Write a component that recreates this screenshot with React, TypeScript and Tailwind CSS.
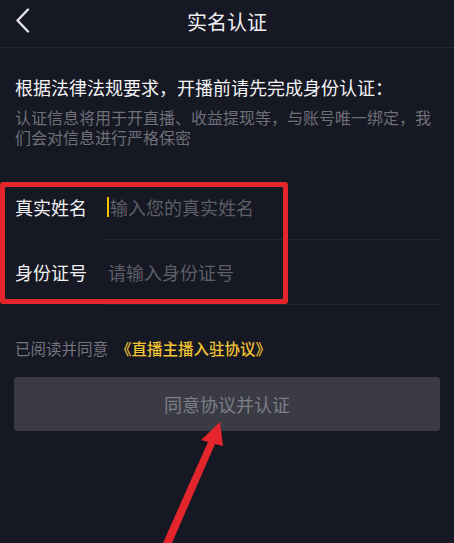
import React from "react";

export default function App() {
  return (
    <div
      className="relative w-[454px] h-[543px] overflow-hidden bg-[#161823] text-[#ececee]"
      style={{ fontFamily: '"Noto Sans CJK SC", "Noto Sans", sans-serif' }}
    >
      {/* Header */}
      <div className="relative h-[48px] flex items-center justify-center border-b border-[#252733]">
        <svg
          className="absolute left-[14px] top-[8px]"
          width="18"
          height="25"
          viewBox="0 0 18 25"
          fill="none"
        >
          <path d="M14 1.5 L3.5 12.5 L14 23.5" stroke="#e6e6e8" strokeWidth="2.4" strokeLinecap="round" strokeLinejoin="round" />
        </svg>
        <span className="text-[20px] leading-[28px] -mt-[3px] text-[#f0f0f2]">实名认证</span>
      </div>

      {/* Intro */}
      <div className="px-[15px]">
        <div className="mt-[27px] text-[18px] leading-[24px] text-[#f4f4f6] whitespace-nowrap">
          根据法律法规要求，开播前请先完成身份认证：
        </div>
        <div className="mt-[8px] text-[16px] leading-[20px] text-[#6e6f78]">
          认证信息将用于开直播、收益提现等，与账号唯一绑定，我们会对信息进行严格保密
        </div>
      </div>

      {/* Form */}
      <div className="mt-[28px]">
        <div className="flex h-[65px]">
          <div className="w-[105px] pl-[15px] flex items-center text-[18px] text-[#f0f0f2]">真实姓名</div>
          <div className="flex-1 mr-[15px] border-b border-[#262833] flex items-center">
            <span className="ml-[2px] w-[2px] h-[20px] bg-[#f2c200]" />
            <span className="ml-[1px] text-[18px] text-[#5d5e67]">输入您的真实姓名</span>
          </div>
        </div>
        <div className="flex h-[65px]">
          <div className="w-[105px] pl-[15px] flex items-center text-[18px] text-[#f0f0f2]">身份证号</div>
          <div className="flex-1 mr-[15px] border-b border-[#262833] flex items-center">
            <span className="ml-[3px] text-[18px] text-[#5d5e67]">请输入身份证号</span>
          </div>
        </div>
      </div>

      {/* Agreement */}
      <div className="mt-[34px] px-[15px] flex items-center h-[20px] text-[15.5px]">
        <span className="text-[#74757e]">已阅读并同意</span>
        <span className="ml-[8px] font-medium text-[#f3c433]">《直播主播入驻协议》</span>
      </div>

      {/* Button */}
      <div className="mt-[18px] mx-[14px] h-[54px] rounded-[3px] bg-[#3a3b45] flex items-center justify-center">
        <span className="text-[18px] text-[#7d7e87]">同意协议并认证</span>
      </div>

      {/* Red annotation box */}
      <div className="absolute left-0 top-[182px] w-[288px] h-[122px] border-[5px] border-[#e4262c] rounded-[3px]" />

      {/* Red arrow */}
      <svg className="absolute left-0 top-0" width="454" height="543" viewBox="0 0 454 543">
        <polygon
          points="163,543 208,442 201,440 220,422 223,446 215,444 172,543"
          fill="#e4262c"
        />
      </svg>
    </div>
  );
}
